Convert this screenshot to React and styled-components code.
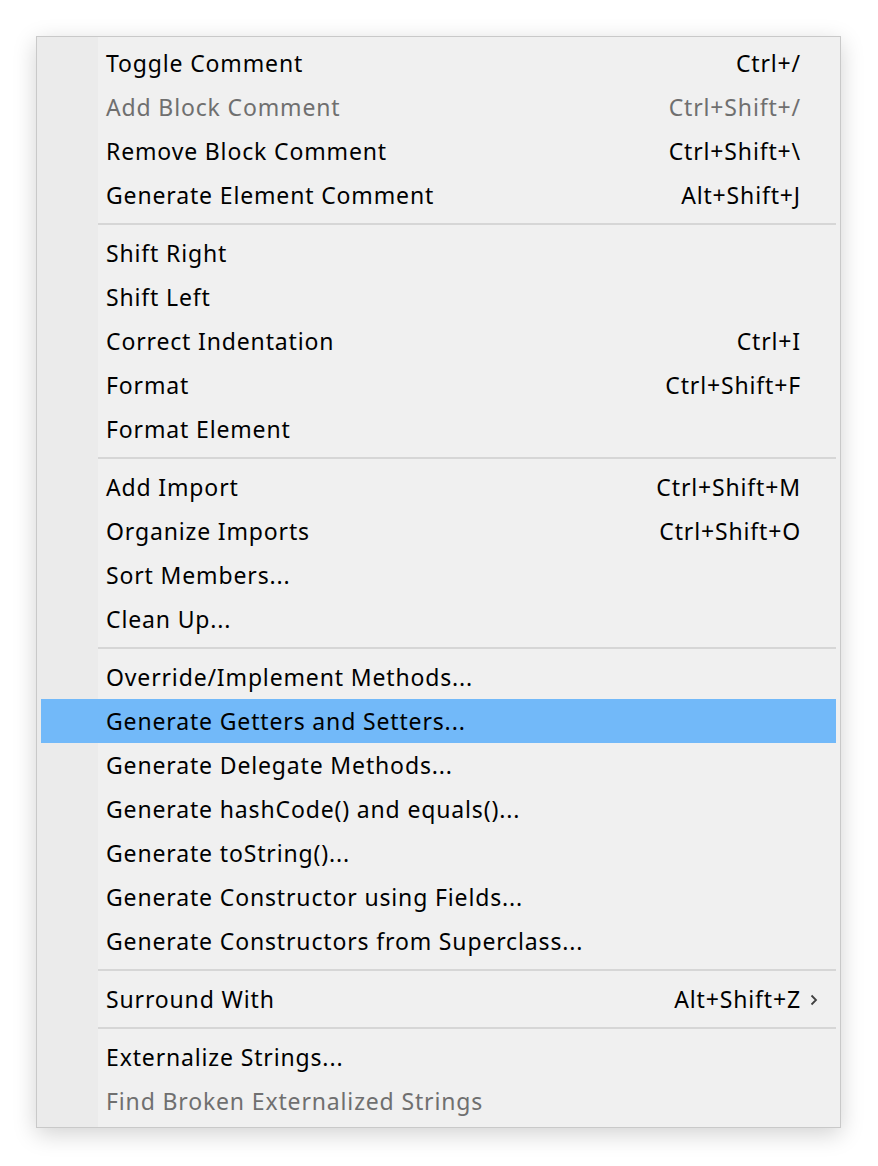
import React from 'react';
import styled, { createGlobalStyle } from 'styled-components';

const sections = [
  [
    { label: 'Toggle Comment', key: 'Ctrl+/' },
    { label: 'Add Block Comment', key: 'Ctrl+Shift+/', disabled: true },
    { label: 'Remove Block Comment', key: 'Ctrl+Shift+\\' },
    { label: 'Generate Element Comment', key: 'Alt+Shift+J' },
  ],
  [
    { label: 'Shift Right' },
    { label: 'Shift Left' },
    { label: 'Correct Indentation', key: 'Ctrl+I' },
    { label: 'Format', key: 'Ctrl+Shift+F' },
    { label: 'Format Element' },
  ],
  [
    { label: 'Add Import', key: 'Ctrl+Shift+M' },
    { label: 'Organize Imports', key: 'Ctrl+Shift+O' },
    { label: 'Sort Members...' },
    { label: 'Clean Up...' },
  ],
  [
    { label: 'Override/Implement Methods...' },
    { label: 'Generate Getters and Setters...', active: true },
    { label: 'Generate Delegate Methods...' },
    { label: 'Generate hashCode() and equals()...' },
    { label: 'Generate toString()...' },
    { label: 'Generate Constructor using Fields...' },
    { label: 'Generate Constructors from Superclass...' },
  ],
  [{ label: 'Surround With', key: 'Alt+Shift+Z', submenu: true }],
  [
    { label: 'Externalize Strings...' },
    { label: 'Find Broken Externalized Strings', disabled: true },
  ],
];

function App() {
  return (
    <>
      <GlobalStyle />
      <Page>
        <Menu>
          {sections.map((items, i) => (
            <React.Fragment key={i}>
              {i > 0 && <Separator />}
              {items.map((item) => (
                <Item key={item.label} $active={item.active} $disabled={item.disabled}>
                  <Label>{item.label}</Label>
                  {item.key && <Shortcut>{item.key}</Shortcut>}
                  {item.submenu && (
                    <Arrow viewBox="0 0 8 12" width="8" height="12">
                      <polyline points="1.5,1.5 6,6 1.5,10.5" />
                    </Arrow>
                  )}
                </Item>
              ))}
            </React.Fragment>
          ))}
        </Menu>
      </Page>
    </>
  );
}

const GlobalStyle = createGlobalStyle`
  html, body {
    margin: 0;
    background: #ffffff;
  }
`;

const Page = styled.div`
  width: 878px;
  height: 1166px;
  padding: 36px 0 0 36px;
  box-sizing: border-box;
`;

const Menu = styled.div`
  width: 805px;
  box-sizing: border-box;
  padding: 4px;
  border: 1px solid #c9c9c9;
  background: linear-gradient(to right, #ebebeb 61px, #f0f0f0 61px);
  box-shadow: 0 6px 22px rgba(0, 0, 0, 0.18);
  font-family: "Noto Sans", "Open Sans", sans-serif;
  font-size: 23px;
  letter-spacing: 0.85px;
`;

const Item = styled.div`
  position: relative;
  display: flex;
  align-items: center;
  height: 44px;
  padding: 0 36px 0 65px;
  background: ${(p) => (p.$active ? '#72b9f9' : 'transparent')};
  color: ${(p) => (p.$disabled ? '#6f6f6f' : '#000000')};
`;

const Label = styled.span`
  flex: 1;
  white-space: nowrap;
`;

const Shortcut = styled.span`
  white-space: nowrap;
  margin-right: -1px;
`;

const Arrow = styled.svg`
  position: absolute;
  right: 18px;
  top: 17px;
  fill: none;
  stroke: #404040;
  stroke-width: 1.8;
`;

const Separator = styled.div`
  height: 2px;
  margin: 6px 0 6px 57px;
  background: #d6d6d6;
`;

export default App;
